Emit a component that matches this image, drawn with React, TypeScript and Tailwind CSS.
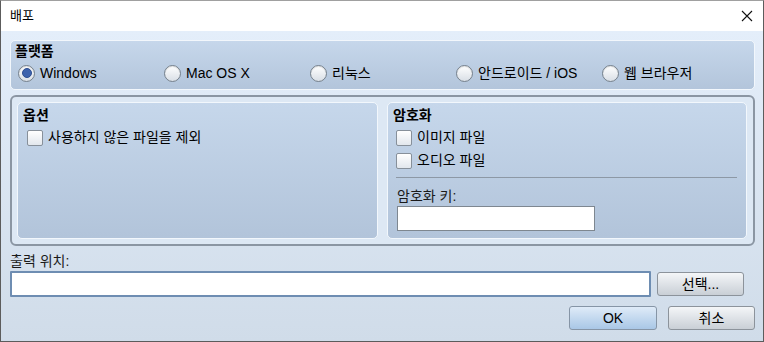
import React from 'react'

function Radio({ label, checked }: { label: string; checked?: boolean }) {
  return (
    <div className="flex items-center gap-[5px] h-[18px]">
      <span className="w-[17px] h-[17px] rounded-full border border-[#76818c] bg-gradient-to-b from-white to-[#d9dfe6] flex items-center justify-center shadow-[inset_0_1px_1px_rgba(0,0,0,0.12)]">
        {checked && <span className="w-[10px] h-[10px] rounded-full bg-[#3e63ad] border border-[#2f4f91]" />}
      </span>
      <span className="leading-[18px]">{label}</span>
    </div>
  )
}

function Checkbox({ label }: { label: string }) {
  return (
    <div className="flex items-center gap-[5px] h-[17px]">
      <span className="w-[16px] h-[16px] rounded-[2px] border border-[#87909a] bg-gradient-to-b from-white to-[#e2e7ed]" />
      <span className="leading-[17px]">{label}</span>
    </div>
  )
}

function Button({ label, primary }: { label: string; primary?: boolean }) {
  return (
    <button
      className={
        primary
          ? 'w-[88px] h-[24px] rounded-[3px] border border-[#8695a6] bg-gradient-to-b from-[#dfebf8] to-[#a9c7e6] text-[14px] leading-[22px] text-black'
          : 'w-[87px] h-[24px] rounded-[3px] border border-[#8c939b] bg-gradient-to-b from-[#f4f6f8] to-[#c9cfd6] text-[14px] leading-[22px] text-black'
      }
    >
      {label}
    </button>
  )
}

export default function App() {
  return (
    <div className="w-[764px] h-[342px] flex flex-col border border-[#5c5c5c] border-t-[#a0a0a0] bg-white text-[14px] text-black font-['Liberation_Sans','Noto_Sans_CJK_KR',sans-serif]">
      {/* title bar */}
      <div className="h-[30px] flex items-center justify-between pl-[9px] pr-[9px] bg-white">
        <span className="text-[13px] text-black">배포</span>
        <svg width="12" height="12" viewBox="0 0 12 12" className="mr-[1px]">
          <path d="M1 1 L11 11 M11 1 L1 11" stroke="#111" strokeWidth="1.1" />
        </svg>
      </div>

      {/* body */}
      <div className="flex-1 flex flex-col pt-[9px] pl-[9px] bg-gradient-to-b from-[#e4eefa] to-[#d0dce9]">
        {/* platform */}
        <div className="w-[745px] h-[50px] rounded-[5px] border border-[#f2f7fc] bg-gradient-to-b from-[#c6d7eb] to-[#b3c5db] pt-[2px] pl-[7px]">
          <div className="font-bold leading-[17px] -ml-[3px]">플랫폼</div>
          <div className="grid grid-cols-[146px_146px_146px_146px_146px] mt-[4px]">
            <Radio label="Windows" checked />
            <Radio label="Mac OS X" />
            <Radio label="리눅스" />
            <Radio label="안드로이드 / iOS" />
            <Radio label="웹 브라우저" />
          </div>
        </div>

        {/* options / encryption */}
        <div className="mt-[5px] w-[745px] h-[151px] rounded-[6px] border-2 border-[#8b96a3] bg-[#dde8f4] flex gap-[9px] pt-[5px] pl-[5px] pr-[6px]">
          <div className="w-[361px] h-[137px] rounded-[5px] border border-[#f2f7fc] bg-gradient-to-b from-[#c6d7eb] to-[#b2c4da] pt-[4px] pl-[5px]">
            <div className="font-bold leading-[17px]">옵션</div>
            <div className="mt-[5px] pl-[4px]">
              <Checkbox label="사용하지 않은 파일을 제외" />
            </div>
          </div>
          <div className="flex-1 h-[137px] rounded-[5px] border border-[#f2f7fc] bg-gradient-to-b from-[#c6d7eb] to-[#b2c4da] pt-[4px] pl-[5px] pr-[9px]">
            <div className="font-bold leading-[17px]">암호화</div>
            <div className="pl-[3px] flex flex-col gap-[6px] mt-[5px]">
              <Checkbox label="이미지 파일" />
              <Checkbox label="오디오 파일" />
            </div>
            <div className="ml-[3px] mt-[8px] h-px bg-[#8d98a5]" />
            <div className="pl-[4px] mt-[10px] leading-[17px] text-[#1a1a1a]">암호화 키:</div>
            <div className="ml-[4px] mt-[1px] w-[198px] h-[25px] bg-white border border-[#7e8790]" />
          </div>
        </div>

        {/* output */}
        <div className="mt-[7px] leading-[17px] text-[#1a1a1a]">출력 위치:</div>
        <div className="flex items-center gap-[6px] mt-[1px] w-[745px]">
          <div className="w-[641px] h-[26px] bg-white border-2 border-[#6e8db2] rounded-[1px]" />
          <Button label="선택..." />
        </div>
        <div className="flex justify-end gap-[11px] mt-[9px] w-[745px]">
          <Button label="OK" primary />
          <Button label="취소" />
        </div>
      </div>
    </div>
  )
}
